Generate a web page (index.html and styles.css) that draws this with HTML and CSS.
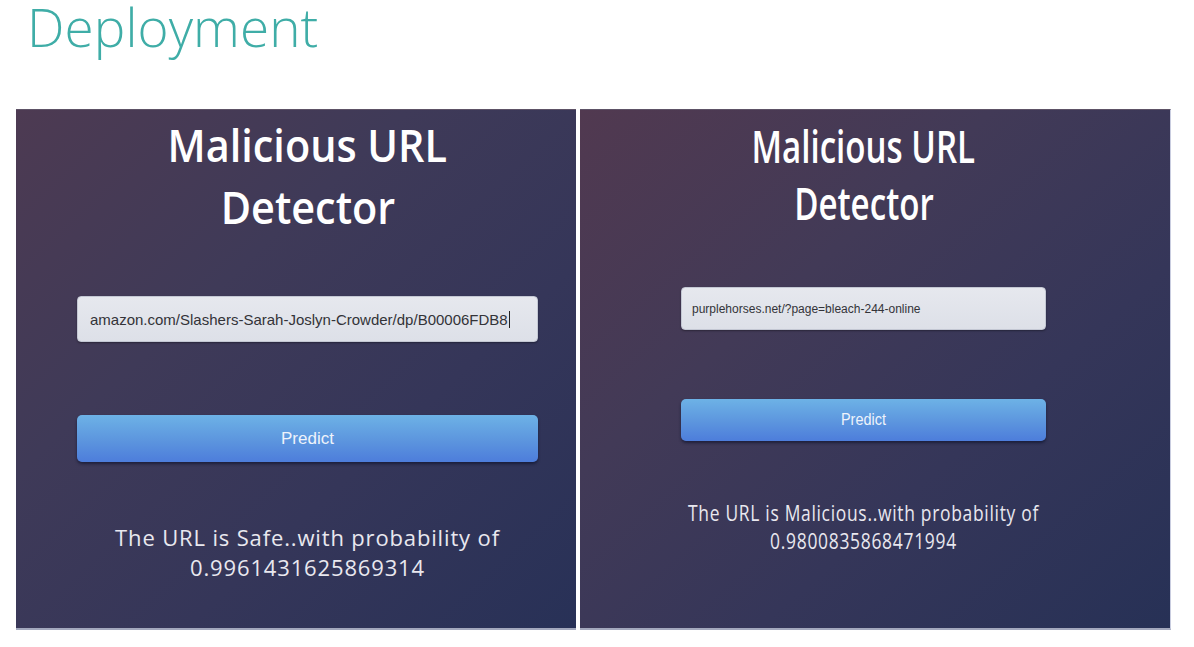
FILE: index.html
```html
<!DOCTYPE html>
<html>
<head>
<meta charset="utf-8">
<link rel="stylesheet" href="styles.css">
</head>
<body>
<div class="slide">
  <h1 class="slide-title">Deployment</h1>
  <div class="shots">
    <div class="panel panel-left">
      <h2 class="app-title"><span class="title-line">Malicious URL</span><span class="title-line">Detector</span></h2>
      <div class="url-input"><span class="url-text">amazon.com/Slashers-Sarah-Joslyn-Crowder/dp/B00006FDB8</span><span class="caret"></span></div>
      <div class="predict-btn"><span class="btn-text">Predict</span></div>
      <p class="result"><span class="result-line">The URL is Safe..with probability of</span><span class="result-line">0.9961431625869314</span></p>
    </div>
    <div class="panel panel-right">
      <h2 class="app-title"><span class="title-line">Malicious URL</span><span class="title-line">Detector</span></h2>
      <div class="url-input"><span class="url-text">purplehorses.net/?page=bleach-244-online</span></div>
      <div class="predict-btn"><span class="btn-text">Predict</span></div>
      <p class="result"><span class="result-line">The URL is Malicious..with probability of</span><span class="result-line">0.9800835868471994</span></p>
    </div>
  </div>
</div>
</body>
</html>
```

FILE: styles.css
```css
html, body {
  margin: 0;
  padding: 0;
  background: #ffffff;
}

.slide {
  width: 1194px;
  height: 647px;
  display: flex;
  flex-direction: column;
  padding-left: 16px;
  box-sizing: border-box;
}

.slide-title {
  margin: 0 0 55px 11px;
  font-family: "Open Sans", sans-serif;
  font-weight: 300;
  font-size: 53px;
  line-height: 54px;
  color: #3fada7;
  letter-spacing: 0.1px;
}

.shots {
  display: flex;
  gap: 4px;
}

.panel {
  height: 521px;
  box-sizing: border-box;
  display: flex;
  flex-direction: column;
  align-items: stretch;
  border-top: 1px solid #5d5266;
  border-bottom: 2px solid #a3a8bd;
  color: #ffffff;
}

.panel-left {
  width: 560px;
  padding: 3px 38px 0 61px;
  background: linear-gradient(to bottom right, #4d3a52 0%, #3f3a58 35%, #353659 65%, #283157 100%);
}

.panel-right {
  width: 591px;
  padding: 7px 124px 0 101px;
  border-right: 1px solid #c9cde0;
  background: linear-gradient(to bottom right, #513950 0%, #423a57 35%, #353659 65%, #273156 100%);
}

.app-title {
  margin: 0;
  display: flex;
  flex-direction: column;
  align-items: center;
  font-family: "Open Sans", sans-serif;
  font-weight: 600;
  color: #ffffff;
}

.title-line {
  display: block;
  white-space: nowrap;
}

.panel-left .app-title {
  font-size: 46px;
  line-height: 62px;
}

.panel-left .title-line {
  transform: scaleX(0.9);
}

.panel-right .app-title {
  font-size: 46px;
  line-height: 57px;
}

.panel-right .title-line {
  transform: scaleX(0.72);
}

.url-input {
  display: flex;
  align-items: center;
  box-sizing: border-box;
  background: linear-gradient(180deg, #e6e8ee 0%, #dde0e8 100%);
  border: 1px solid #c3c7d3;
  border-radius: 4px;
  box-shadow: 0 1px 2px rgba(0, 0, 0, 0.35);
  font-family: "Liberation Sans", Arial, sans-serif;
  color: #333338;
  white-space: nowrap;
}

.panel-left .url-input {
  height: 46px;
  margin-top: 59px;
  padding-left: 12px;
  font-size: 15px;
}

.panel-right .url-input {
  height: 43px;
  margin-top: 56px;
  padding-left: 10px;
  font-size: 12px;
}

.caret {
  display: inline-block;
  width: 1px;
  height: 17px;
  background: #222;
  margin-left: 1px;
}

.predict-btn {
  display: flex;
  align-items: center;
  justify-content: center;
  box-sizing: border-box;
  border-radius: 5px;
  background: linear-gradient(180deg, #6db2e6 0%, #5c95de 55%, #4d7ddb 100%);
  box-shadow: 0 2px 3px rgba(10, 15, 40, 0.6);
  font-family: "Liberation Sans", Arial, sans-serif;
  color: #eef3fb;
}

.panel-left .predict-btn {
  height: 47px;
  margin-top: 73px;
  font-size: 17px;
}

.panel-right .predict-btn {
  height: 42px;
  margin-top: 69px;
  font-size: 17px;
}

.panel-right .btn-text {
  display: inline-block;
  transform: scaleX(0.85);
}

.result {
  margin: 0;
  display: flex;
  flex-direction: column;
  align-items: center;
  font-family: "Open Sans", sans-serif;
  font-weight: 400;
  font-size: 22px;
  color: #e9e8ef;
  letter-spacing: 0.85px;
}

.result-line {
  display: block;
  white-space: nowrap;
}

.panel-left .result {
  margin-top: 60px;
  line-height: 30px;
}

.panel-right .result {
  margin-top: 58px;
  font-size: 21px;
  line-height: 28px;
}

.panel-right .result-line {
  transform: scaleX(0.83);
}
```
